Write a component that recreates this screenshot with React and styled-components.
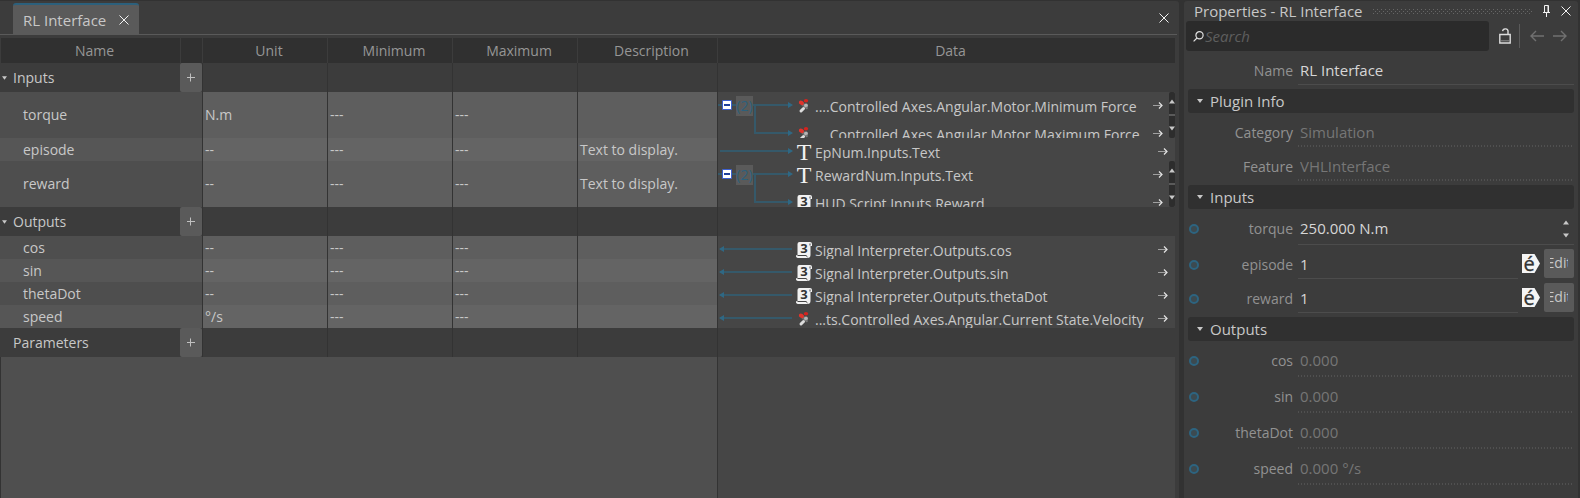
import React from 'react';
import styled, { createGlobalStyle, css } from 'styled-components';

const Global = createGlobalStyle`
  * { box-sizing: border-box; }
  body { margin: 0; background: #323232; }
  body, button, input { font-family: "Open Sans", "Noto Sans", sans-serif; }
  button { border: 0; padding: 0; margin: 0; background: none; color: inherit; font-size: inherit; }
  svg { display: block; flex: none; }
`;

const Window = styled.div`
  display: flex;
  gap: 5px;
  height: 100vh;
  padding: 1px 2px 0 0;
  color: #c8c8c8;
  font-size: 14px;
`;

const Editor = styled.main`
  flex: 1;
  min-width: 0;
  display: flex;
  flex-direction: column;
  gap: 3px;
  background: #3c3c3c;
  border-top-right-radius: 3px;
`;

const TabBar = styled.div`
  display: flex;
  align-items: flex-end;
  justify-content: space-between;
  height: 34px;
  margin-right: 2px;
  padding: 0 8px 0 13px;
  border-bottom: 1px solid #5a5a5a;
`;

const Tab = styled.div`
  display: flex;
  align-items: center;
  gap: 13px;
  height: 31px;
  padding: 0 10px 0 10px;
  border-top: 2px solid #2c607c;
  border-radius: 3px 3px 0 0;
  background: #5a5a5a;
`;

const TabName = styled.button`
  font-size: 15px;
  line-height: 28px;
`;

const IconButton = styled.button`
  display: flex;
  align-items: center;
  justify-content: center;
  flex: none;
  width: ${p => p.$w || 10}px;
  height: ${p => p.$h || 20}px;
  color: ${p => (p.$dim ? '#707070' : '#f2f2f2')};
`;

const PanelClose = styled(IconButton)`
  align-self: center;
`;

const TableArea = styled.div`
  flex: 1;
  min-height: 0;
  padding-right: 4px;
`;

const Table = styled.table`
  width: 100%;
  height: 100%;
  table-layout: fixed;
  border-spacing: 0;
  border-collapse: separate;
`;

const Col = styled.col`
  width: ${p => p.$w};
`;

const HeadCell = styled.th`
  height: 25px;
  padding: 1px 0 0 8px;
  border-left: 1px solid #3c3c3c;
  background: #303030;
  color: #969696;
  font-size: 14px;
  font-weight: 400;
  line-height: 24px;
`;

const cell = css`
  padding: 0;
  border-left: 1px solid #333;
  text-align: left;
  vertical-align: middle;
  font-weight: 400;
  line-height: 20px;
`;

const Row = styled.tr`
  height: ${p => p.$h}px;
`;

const GroupName = styled.th`
  padding: 0;
  text-align: left;
  font-weight: 400;
`;

const GroupToggle = styled.button`
  display: flex;
  align-items: center;
  gap: 6px;
  padding-left: 2px;
  line-height: 20px;
`;

const GroupAction = styled.td`
  padding: 0;
`;

const AddButton = styled.button`
  display: flex;
  align-items: center;
  justify-content: center;
  width: 22px;
  height: 29px;
  border-radius: 2px;
  background: #5a5a5a;
`;

const EmptyCell = styled.td`
  ${cell}
`;

const NameCell = styled.th`
  ${cell}
  border-left: 0;
  padding-left: 23px;
  background: ${p => (p.$alt ? '#565656' : '#4e4e4e')};
`;

const ValueCell = styled.td`
  ${cell}
  padding-left: 2px;
  background: ${p => (p.$alt ? '#646464' : '#5e5e5e')};
`;

const DataCell = styled.td`
  ${cell}
  vertical-align: top;
  background: #464646;
`;

const FillCell = styled.td`
  padding: 0;
  border-left: 1px solid #333;
  background: ${p => (p.$dark ? '#464646' : '#4f4f4f')};
`;

const Links = styled.div`
  display: flex;
  height: ${p => p.$h}px;
  overflow: hidden;
`;

const Lead = styled.div`
  display: flex;
  flex: none;
  align-items: flex-start;
  width: 78px;
`;

const Collapse = styled.button`
  display: flex;
  align-items: center;
  justify-content: center;
  width: 10px;
  height: 10px;
  margin-top: 8px;
  border: 1px solid #3c5fd0;
  border-radius: 1px;
  background: #fff;
`;

const Count = styled.span`
  width: 17px;
  height: 20px;
  margin-top: 4px;
  background: #5a5a5a;
  color: #2c607c;
  font-size: 14px;
  line-height: 20px;
  text-align: center;
`;

const LinkList = styled.div`
  flex: 1;
  min-width: 0;
`;

const LinkRow = styled.div`
  display: flex;
  align-items: flex-start;
  height: 28px;
  padding-right: ${p => (p.$scroll ? 6 : 7)}px;
`;

const LinkIcon = styled.span`
  display: flex;
  align-items: center;
  justify-content: center;
  flex: none;
  width: 16px;
  height: 28px;
  margin-right: 3px;
`;

const LinkText = styled.span`
  flex: 1;
  min-width: 0;
  white-space: nowrap;
  line-height: 30px;
`;

const TextGlyph = styled.span`
  color: #f2f2f2;
  font-family: "Liberation Serif", serif;
  font-size: 24px;
  line-height: 28px;
`;

const Scroller = styled.div`
  display: flex;
  flex-direction: column;
  justify-content: space-between;
  flex: none;
  width: 6px;
  padding: 7px 0;
  border-radius: 2px;
  background: #2d2d2d;
  color: #c8c8c8;
`;

const Thumb = styled.span`
  height: 2px;
  background: #5a5a5a;
`;

/* Properties panel */

const Panel = styled.aside`
  display: flex;
  flex-direction: column;
  flex: none;
  width: 394px;
  background: #3c3c3c;
  border-radius: 3px 3px 0 0;
  font-size: 15px;
`;

const TitleBar = styled.header`
  display: flex;
  align-items: center;
  gap: 10px;
  height: 20px;
  padding: 0 7px 0 10px;
`;

const Title = styled.h1`
  margin: 0;
  font-size: 15px;
  font-weight: 400;
  line-height: 20px;
`;

const Grip = styled.span`
  flex: 1;
  height: 5px;
  background-image: conic-gradient(from 270deg at 1px 1px, #666 90deg, transparent 0),
    conic-gradient(from 270deg at 1px 1px, #666 90deg, transparent 0);
  background-size: 4px 4px;
  background-position: 0 0, 2px 2px;
`;

const SearchBar = styled.div`
  display: flex;
  align-items: center;
  height: 30px;
  padding: 0 11px 0 2px;
`;

const SearchBox = styled.label`
  display: flex;
  align-items: center;
  gap: 1px;
  flex: 1;
  height: 30px;
  padding-left: 7px;
  border-radius: 3px;
  background: #2b2b2b;
`;

const SearchInput = styled.input`
  flex: 1;
  min-width: 0;
  height: 28px;
  padding: 0;
  border: 0;
  outline: 0;
  background: none;
  color: #c8c8c8;
  font-size: 15px;
  &::placeholder { color: #5e5e5e; font-style: italic; opacity: 1; }
`;

const LockButton = styled(IconButton)`
  margin: 0 8px 0 10px;
`;

const Nav = styled.div`
  display: flex;
  align-items: center;
  gap: 9px;
  height: 24px;
  padding-left: 10px;
  border-left: 1px solid #5a5a5a;
`;

const Section = styled.section`
  padding: 4px 4px 0 4px;
`;

const SectionHeader = styled.h2`
  margin: 0;
  font-size: 15px;
  font-weight: 400;
`;

const SectionToggle = styled.button`
  display: flex;
  align-items: center;
  gap: 7px;
  width: 100%;
  height: 24px;
  padding-left: 9px;
  border-radius: 3px;
  background: #303030;
  line-height: 24px;
`;

const Field = styled.div`
  display: flex;
  height: ${p => p.$h}px;
  padding-right: ${p => (p.$top ? 4 : 0)}px;
  padding-left: ${p => (p.$top ? 4 : 0)}px;
`;

const Port = styled.span`
  flex: none;
  width: 10px;
  height: 10px;
  margin: 15px 0 0 1px;
  border: 2px solid #2d6480;
  border-radius: 50%;
  background: #3c4a50;
  visibility: ${p => (p.$on ? 'visible' : 'hidden')};
`;

const FieldLabel = styled.label`
  flex: none;
  width: 94px;
  margin-right: 5px;
  padding-top: 8px;
  color: #929292;
  font-size: 14px;
  line-height: 24px;
  text-align: right;
`;

const FieldBox = styled.div`
  display: flex;
  flex: 1;
  min-width: 0;
  padding: 7px 5px 0 2px;
  ${p =>
    p.$readOnly
      ? css`
          background: repeating-linear-gradient(90deg, #505050 0 1px, transparent 1px 3px) bottom / 100% 2px no-repeat;
        `
      : css`
          border-bottom: 1px solid #4c4c4c;
        `}
`;

const FieldInput = styled.input`
  flex: 1;
  min-width: 0;
  height: 24px;
  padding: 0;
  border: 0;
  outline: 0;
  background: none;
  color: ${p => (p.readOnly ? '#767676' : '#d6d6d6')};
  font-size: 15px;
`;

const Spinner = styled.span`
  display: flex;
  flex-direction: column;
  justify-content: space-between;
  height: 18px;
  margin-top: 4px;
`;

const SpinButton = styled.button`
  width: 6px;
  height: 5px;
  color: #c8c8c8;
`;

const Extras = styled.div`
  display: flex;
  align-items: center;
  gap: 4px;
  flex: none;
  height: 29px;
  margin-top: 4px;
  padding-left: 4px;
`;

const EditButton = styled.button`
  display: flex;
  justify-content: center;
  width: 30px;
  height: 29px;
  padding: 0 6px;
  border-radius: 2px;
  background: #5a5a5a;
  font-size: 14px;
  line-height: 28px;
`;

const EditText = styled.span`
  display: flex;
  justify-content: center;
  width: 18px;
  overflow: hidden;
`;

const Cross = () => (
  <svg width="10" height="10" viewBox="0 0 10 10" stroke="currentColor" strokeWidth="1" fill="none">
    <path d="M0.5 0.5l9 9M9.5 0.5l-9 9" />
  </svg>
);

const Plus = () => (
  <svg width="8" height="9" viewBox="0 0 8 9" stroke="#c0c0c0" fill="none">
    <path d="M0 4.5h8M3.5 0.5v8" />
  </svg>
);

const Triangle = ({ up, w = 6, h = 4 }) => (
  <svg width={w} height={h} viewBox="0 0 6 4" fill="currentColor">
    <path d={up ? 'M0 4L3 0L6 4Z' : 'M0 0H6L3 4Z'} />
  </svg>
);

const GoArrow = () => (
  <svg width="10" height="9" viewBox="0 0 10 9" fill="none">
    <path d="M0 4.5h9" stroke="#a0a0a0" />
    <path d="M6 1.500l3 3l-3 3" stroke="#e6e6e6" strokeWidth="1.200" />
  </svg>
);

const NavArrow = ({ right }) => (
  <svg width="14" height="12" viewBox="0 0 14 12" fill="none" stroke="currentColor" strokeWidth="1.4">
    <path d={right ? 'M0 6h13M8 1l5 5-5 5' : 'M14 6H1M6 1L1 6l5 5'} />
  </svg>
);

const Pin = () => (
  <svg width="8" height="12" viewBox="0 0 8 12" fill="none" stroke="currentColor">
    <path d="M1.5 7V0.5h4V7M0 7.5h7M3.500 8v4" />
    <path d="M5 1v6" />
  </svg>
);

const Magnifier = () => (
  <svg width="11" height="11" viewBox="0 0 11 11" fill="none" stroke="#e0e0e0" strokeWidth="1.2">
    <circle cx="6.5" cy="4.3" r="3.6" />
    <path d="M4 7L0.6 10.4" />
  </svg>
);

const Lock = () => (
  <svg width="12" height="16" viewBox="0 0 12 16" fill="none" stroke="#dcdcdc" strokeWidth="1.4">
    <path d="M0.8 6.5h10.4v8.5H0.8z" />
    <path d="M9 6.5V4a2.6 2.6 0 0 0-5.4-0.8" />
    <path d="M1 12.8h10" stroke="#8c8c8c" strokeWidth="1" />
  </svg>
);

const Motor = () => (
  <svg width="14" height="16" viewBox="0 0 14 16">
    <path d="M5.500 6l3.500 3" stroke="#6e6e6e" strokeWidth="3.500" />
    <ellipse cx="4.400" cy="4.800" rx="2.700" ry="2.100" fill="#e2342c" transform="rotate(30 4.400 4.800)" />
    <ellipse cx="9" cy="2.800" rx="2.200" ry="1.700" fill="#d3241f" />
    <ellipse cx="9" cy="7.600" rx="1.900" ry="2.100" fill="#b4b4b4" />
    <path d="M6.500 10.500l-2.500 2.500" stroke="#dcdcdc" strokeWidth="3" strokeLinecap="round" />
    <circle cx="9.600" cy="10" r="1.200" fill="#787878" />
  </svg>
);

const Script = () => (
  <svg width="16" height="16" viewBox="0 0 16 16">
    <path d="M3.500 0h10.500a2 2 0 0 1 2 2v2h-1.500v9a3 3 0 0 1-3 3H2.200a2.200 2.200 0 0 1-2.200-2.800h1.500V2a2 2 0 0 1 2-2z" fill="#f2f2f2" />
    <path d="M1.500 13.500h8.800q0.200 1.200 1.200 1.500" stroke="#464646" fill="none" />
    <path d="M14 1.500v2" stroke="#464646" />
    <text x="8" y="10.800" textAnchor="middle" fontFamily="Open Sans, sans-serif" fontWeight="700" fontSize="13" fill="#333">3</text>
  </svg>
);

const Tag = () => (
  <svg width="18" height="19" viewBox="0 0 18 19">
    <path d="M0 0h12.500L18 9.500L12.500 19H0z" fill="#f5f5f5" />
    <text x="7" y="16.500" textAnchor="middle" fontFamily="Open Sans, sans-serif" fontSize="20" fill="#333" stroke="#333" strokeWidth="0.300">é</text>
  </svg>
);

const WIRE = '#35596a';
const HEAD = '#2f6884';

const Stub = () => (
  <svg width="4" height="28">
    <path d="M0 13h4" stroke={WIRE} strokeWidth="2" />
  </svg>
);

const Wire = ({ out }) => (
  <svg width="78" height="23">
    <path d="M2 13h72" stroke={WIRE} strokeWidth="2" />
    <path d={out ? 'M1 13l5-3v6z' : 'M75 13l-5-3v6z'} fill={HEAD} />
  </svg>
);

const Branch = () => (
  <svg width="43" height="46">
    <path d="M0 13h36M2 13v28h34" stroke={WIRE} strokeWidth="2" fill="none" />
    <path d="M40 13l-5-3v6zM40 41l-5-3v6z" fill={HEAD} />
  </svg>
);

const icons = { motor: <Motor />, script: <Script />, text: <TextGlyph aria-hidden="true">T</TextGlyph> };

const groups = [
  {
    name: 'Inputs',
    rows: [
      { name: 'torque', unit: 'N.m', desc: '', links: [
        ['motor', '....Controlled Axes.Angular.Motor.Minimum Force'],
        ['motor', '....Controlled Axes.Angular.Motor.Maximum Force'],
      ] },
      { name: 'episode', unit: '--', desc: 'Text to display.', links: [['text', 'EpNum.Inputs.Text']] },
      { name: 'reward', unit: '--', desc: 'Text to display.', links: [
        ['text', 'RewardNum.Inputs.Text'],
        ['script', 'HUD Script.Inputs.Reward'],
      ] },
    ],
  },
  {
    name: 'Outputs',
    out: true,
    rows: [
      { name: 'cos', unit: '--', links: [['script', 'Signal Interpreter.Outputs.cos']] },
      { name: 'sin', unit: '--', links: [['script', 'Signal Interpreter.Outputs.sin']] },
      { name: 'thetaDot', unit: '--', links: [['script', 'Signal Interpreter.Outputs.thetaDot']] },
      { name: 'speed', unit: '°/s', links: [['motor', '...ts.Controlled Axes.Angular.Current State.Velocity']] },
    ],
  },
  { name: 'Parameters', rows: [] },
];

function DataLinks({ links, out }) {
  const many = links.length > 1;
  return (
    <Links $h={many ? 46 : 23}>
      <Lead>
        {many ? (
          <>
            <Stub />
            <Collapse aria-label="Collapse">
              <svg width="6" height="2"><path d="M0 1h6" stroke="#1f3f9c" strokeWidth="2" /></svg>
            </Collapse>
            <Stub />
            <Count>(2)</Count>
            <Branch />
          </>
        ) : (
          <Wire out={out} />
        )}
      </Lead>
      <LinkList>
        {links.map(([icon, text]) => (
          <LinkRow key={text} $scroll={many}>
            <LinkIcon>{icons[icon]}</LinkIcon>
            <LinkText>{text}</LinkText>
            <IconButton $h={26} aria-label={`Go to ${text}`}><GoArrow /></IconButton>
          </LinkRow>
        ))}
      </LinkList>
      {many && (
        <Scroller>
          <Triangle up h={5} />
          <Thumb />
          <Triangle h={5} />
        </Scroller>
      )}
    </Links>
  );
}

function InterfaceTable() {
  return (
    <Table>
      <colgroup>
        <Col $w="180px" /><Col $w="22px" /><Col $w="125px" /><Col $w="125px" />
        <Col $w="125px" /><Col $w="140px" /><Col $w="auto" />
      </colgroup>
      <thead>
        <tr>
          {['Name', '', 'Unit', 'Minimum', 'Maximum', 'Description', 'Data'].map((h, i) => (
            <HeadCell key={i} scope="col">{h}</HeadCell>
          ))}
        </tr>
      </thead>
      <tbody>
        {groups.map(g => (
          <React.Fragment key={g.name}>
            <Row $h={29}>
              <GroupName scope="rowgroup">
                <GroupToggle>
                  {g.rows.length ? <Triangle w={5} /> : <svg width="5" height="4" />}
                  {g.name}
                </GroupToggle>
              </GroupName>
              <GroupAction><AddButton aria-label={`Add to ${g.name}`}><Plus /></AddButton></GroupAction>
              <EmptyCell /><EmptyCell /><EmptyCell /><EmptyCell /><EmptyCell />
            </Row>
            {g.rows.map((r, i) => (
              <Row key={r.name} $h={r.links.length > 1 ? 46 : 23}>
                <NameCell scope="row" colSpan={2} $alt={i % 2 === 1}>{r.name}</NameCell>
                <ValueCell $alt={i % 2 === 1}>{r.unit}</ValueCell>
                <ValueCell $alt={i % 2 === 1}>---</ValueCell>
                <ValueCell $alt={i % 2 === 1}>---</ValueCell>
                <ValueCell $alt={i % 2 === 1}>{r.desc}</ValueCell>
                <DataCell><DataLinks links={r.links} out={g.out} /></DataCell>
              </Row>
            ))}
          </React.Fragment>
        ))}
        <tr>
          <FillCell colSpan={6} />
          <FillCell $dark />
        </tr>
      </tbody>
    </Table>
  );
}

function Property({ id, label, value, h = 34, port, readOnly, spin, edit, top }) {
  return (
    <Field $h={h} $top={top}>
      <Port $on={port} />
      <FieldLabel htmlFor={id}>{label}</FieldLabel>
      <FieldBox $readOnly={readOnly}>
        <FieldInput id={id} defaultValue={value} readOnly={readOnly} />
        {spin && (
          <Spinner>
            <SpinButton aria-label="Increase"><Triangle up h={5} /></SpinButton>
            <SpinButton aria-label="Decrease"><Triangle h={5} /></SpinButton>
          </Spinner>
        )}
      </FieldBox>
      {edit && (
        <Extras>
          <Tag />
          <EditButton><EditText>Edit</EditText></EditButton>
        </Extras>
      )}
    </Field>
  );
}

function PropertySection({ title, children }) {
  return (
    <Section>
      <SectionHeader>
        <SectionToggle aria-expanded="true"><Triangle />{title}</SectionToggle>
      </SectionHeader>
      {children}
    </Section>
  );
}

export default function App() {
  return (
    <>
      <Global />
      <Window>
        <Editor>
          <TabBar>
            <Tab>
              <TabName>RL Interface</TabName>
              <IconButton aria-label="Close tab"><Cross /></IconButton>
            </Tab>
            <PanelClose aria-label="Close panel"><Cross /></PanelClose>
          </TabBar>
          <TableArea><InterfaceTable /></TableArea>
        </Editor>
        <Panel>
          <TitleBar>
            <Title>Properties - RL Interface</Title>
            <Grip />
            <IconButton $w={8} aria-label="Pin"><Pin /></IconButton>
            <IconButton aria-label="Close properties"><Cross /></IconButton>
          </TitleBar>
          <SearchBar>
            <SearchBox>
              <Magnifier />
              <SearchInput type="text" placeholder="Search" aria-label="Search" />
            </SearchBox>
            <LockButton $w={12} aria-label="Lock"><Lock /></LockButton>
            <Nav>
              <IconButton $w={14} $dim aria-label="Back"><NavArrow /></IconButton>
              <IconButton $w={14} $dim aria-label="Forward"><NavArrow right /></IconButton>
            </Nav>
          </SearchBar>
          <Property id="name" label="Name" value="RL Interface" top />
          <PropertySection title="Plugin Info">
            <Property id="category" label="Category" value="Simulation" readOnly />
            <Property id="feature" label="Feature" value="VHLInterface" readOnly />
          </PropertySection>
          <PropertySection title="Inputs">
            <Property id="torque" label="torque" value="250.000 N.m" h={36} port spin />
            <Property id="episode" label="episode" value="1" port edit />
            <Property id="reward" label="reward" value="1" port edit />
          </PropertySection>
          <PropertySection title="Outputs">
            <Property id="cos" label="cos" value="0.000" h={36} port readOnly />
            <Property id="sin" label="sin" value="0.000" h={36} port readOnly />
            <Property id="thetaDot" label="thetaDot" value="0.000" h={36} port readOnly />
            <Property id="speed" label="speed" value="0.000 °/s" h={36} port readOnly />
          </PropertySection>
        </Panel>
      </Window>
    </>
  );
}
